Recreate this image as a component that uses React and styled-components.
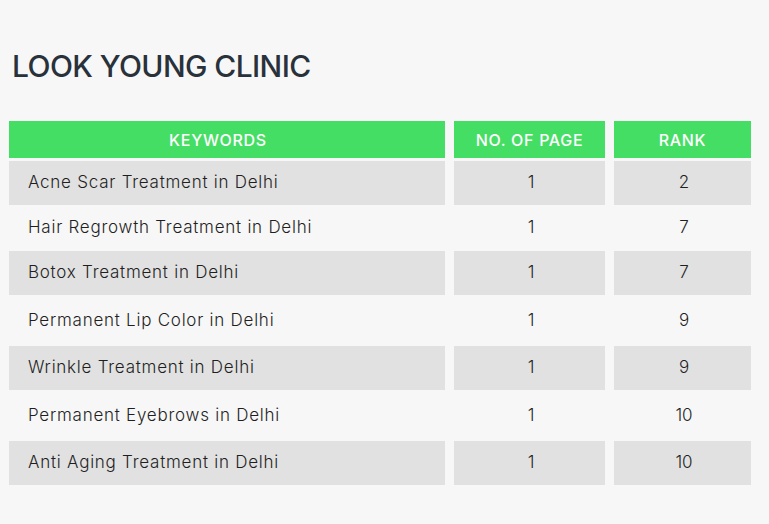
import React from "react";
import styled, { createGlobalStyle } from "styled-components";

const Global = createGlobalStyle`
  html, body { margin: 0; padding: 0; background: #f7f7f7; }
  body { font-family: Inter, "Noto Sans", sans-serif; }
`;

const Page = styled.div`
  width: 769px;
  min-height: 524px;
  background: #f7f7f7;
  padding: 46px 0 0 9px;
  box-sizing: border-box;
`;

const Title = styled.h1`
  margin: 0 0 0 3px;
  font-family: Inter, "Noto Sans", sans-serif;
  font-weight: 500;
  font-size: 30px;
  line-height: 40px;
  color: #29313a;
  letter-spacing: -0.6px;
`;

const Table = styled.div`
  margin-top: 35px;
  display: grid;
  grid-template-columns: 436px 151px 137px;
  column-gap: 9px;
  row-gap: 3px;
`;

const HeadCell = styled.div`
  height: 37px;
  background: #45de64;
  color: #ffffff;
  font-weight: 500;
  font-size: 16px;
  display: flex;
  align-items: center;
  justify-content: center;
  letter-spacing: 0.7px;
  padding-right: ${(p) => (p.$shift ? "18px" : "0")};
  padding-top: 1px;
  box-sizing: border-box;
`;

const Cell = styled.div`
  height: ${(p) => p.$h}px;
  background: ${(p) => (p.$shade ? "#e1e1e1" : "transparent")};
  color: #1f1f1f;
  font-weight: 300;
  font-size: 17px;
  letter-spacing: ${(p) => (p.$left ? "0.75px" : "0")};
  display: flex;
  align-items: center;
  justify-content: ${(p) => (p.$left ? "flex-start" : "center")};
  padding-left: ${(p) => (p.$left ? "19px" : "3px")};
  padding-bottom: 2px;
  box-sizing: border-box;
`;

const rows = [
  ["Acne Scar Treatment in Delhi", 1, 2, 44],
  ["Hair Regrowth Treatment in Delhi", 1, 7, 40],
  ["Botox Treatment in Delhi", 1, 7, 44],
  ["Permanent Lip Color in Delhi", 1, 9, 45],
  ["Wrinkle Treatment in Delhi", 1, 9, 44],
  ["Permanent Eyebrows in Delhi", 1, 10, 45],
  ["Anti Aging Treatment in Delhi", 1, 10, 44],
];

export default function App() {
  return (
    <Page>
      <Global />
      <Title>LOOK YOUNG CLINIC</Title>
      <Table>
        <HeadCell $shift>KEYWORDS</HeadCell>
        <HeadCell>NO. OF PAGE</HeadCell>
        <HeadCell>RANK</HeadCell>
        {rows.map(([k, p, r, h], i) => (
          <React.Fragment key={k}>
            <Cell $left $shade={i % 2 === 0} $h={h}>{k}</Cell>
            <Cell $shade={i % 2 === 0} $h={h}>{p}</Cell>
            <Cell $shade={i % 2 === 0} $h={h}>{r}</Cell>
          </React.Fragment>
        ))}
      </Table>
    </Page>
  );
}
